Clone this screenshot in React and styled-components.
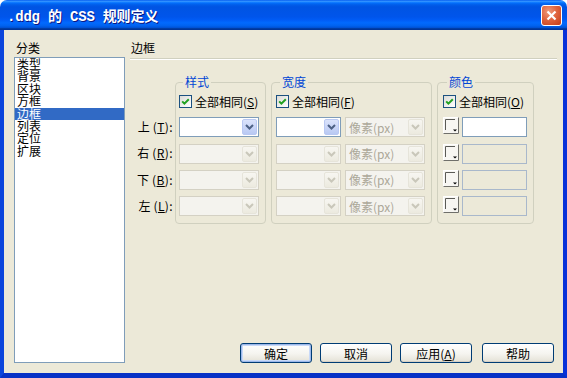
import React from 'react'
import styled, { createGlobalStyle } from 'styled-components'

const GlobalStyle = createGlobalStyle`
  html, body {
    margin: 0;
    padding: 0;
    background: #ffffff;
  }
  body {
    font-family: "Noto Sans CJK SC", "Liberation Sans", sans-serif;
    font-size: 12px;
    color: #000;
  }
`

const Window = styled.div`
  width: 567px;
  height: 378px;
  display: flex;
  flex-direction: column;
  overflow: hidden;
  border-radius: 7px 7px 0 0;
`

const TitleBar = styled.div`
  flex: none;
  height: 30px;
  box-sizing: border-box;
  display: flex;
  align-items: center;
  justify-content: space-between;
  padding: 0 5px 0 7px;
  background: linear-gradient(
    180deg,
    #0058ee 0%,
    #3593ff 4%,
    #288eff 6%,
    #127dff 8%,
    #036ffc 10%,
    #0262ee 14%,
    #0057e5 20%,
    #0054e3 24%,
    #0055eb 56%,
    #005bf5 66%,
    #026afe 76%,
    #0062ef 86%,
    #0052d6 92%,
    #0040ab 94%,
    #003092 100%
  );
`

const Title = styled.div`
  color: #fff;
  font-family: "Liberation Mono", "Noto Sans CJK SC", monospace;
  font-weight: bold;
  font-size: 14px;
  letter-spacing: -0.2px;
  text-shadow: 1px 1px 0 #0a1883;
  white-space: pre;
`

const CloseButton = styled.button`
  width: 21px;
  height: 21px;
  padding: 0;
  border: 1px solid #fff;
  border-radius: 3px;
  display: flex;
  align-items: center;
  justify-content: center;
  background: radial-gradient(circle at 35% 30%, #ee9a7b 0%, #e0653f 45%, #c43b16 100%);
`

const Frame = styled.div`
  flex: 1;
  display: flex;
  flex-direction: column;
  background: #ece9d8;
  border-left: 4px solid #0b45dc;
  border-right: 4px solid #0831d9;
  border-bottom: 5px solid #0731c6;
  padding: 10px 6px 10px 10px;
  min-height: 0;
`

const Main = styled.div`
  flex: 1;
  display: flex;
  gap: 5px;
  min-height: 0;
`

const Sidebar = styled.div`
  width: 111px;
  flex: none;
  display: flex;
  flex-direction: column;
`

const Caption = styled.div`
  height: 15px;
  line-height: 15px;
  padding-left: 2px;
  margin-bottom: 2px;
`

const CategoryList = styled.ul`
  flex: 1;
  margin: 0;
  padding: 0;
  list-style: none;
  background: #fff;
  border: 1px solid #7f9db9;
`

const CategoryItem = styled.li`
  height: 12.4px;
  line-height: 12.4px;
  padding-left: 2px;
  background: ${p => (p.$active ? '#316ac5' : 'transparent')};
  color: ${p => (p.$active ? '#fff' : '#000')};
`

const Panel = styled.div`
  flex: 1;
  display: flex;
  flex-direction: column;
`

const PanelHeader = styled.div`
  height: 15px;
  line-height: 15px;
  padding: 0 0 3px 1px;
  border-bottom: 1px solid #d0d0bf;
  box-shadow: 0 1px 0 #ffffff;
`

const GroupRow = styled.div`
  display: flex;
  gap: 5px;
  margin-top: 16px;
`

const SideLabels = styled.div`
  width: 45px;
  margin-right: -5px;
  flex: none;
  display: flex;
  flex-direction: column;
  gap: 6.33px;
  padding-top: 42px;
`

const SideLabel = styled.div`
  height: 20px;
  line-height: 20px;
  text-align: right;
  padding-right: 2px;
  white-space: nowrap;
`

const Paren = styled.span`
  margin-left: 3px;
  letter-spacing: 0.4px;
`

const Group = styled.fieldset`
  margin: 0;
  width: ${p => p.$w}px;
  min-inline-size: 0;
  box-sizing: border-box;
  padding: 2px 0 7px ${p => p.$pad}px;
  border: 1px solid #d0d0bf;
  border-radius: 4px;
  display: flex;
  flex-direction: column;
  gap: 6.33px;
`

const Legend = styled.legend`
  margin-left: 4px;
  padding: 0 2px;
  line-height: 14px;
  color: #0046d5;
`

const CheckRow = styled.label`
  height: 20px;
  display: flex;
  align-items: center;
  gap: 3px;
  white-space: nowrap;
`

const CheckBox = styled.span`
  width: 13px;
  height: 13px;
  box-sizing: border-box;
  border: 1px solid #1c5180;
  background: linear-gradient(135deg, #dcdcd7 0%, #ffffff 100%);
  display: flex;
  align-items: center;
  justify-content: center;
`

const Row = styled.div`
  height: 20px;
  display: flex;
  align-items: ${p => (p.$top ? 'flex-start' : 'center')};
  gap: ${p => p.$gap || 4}px;
`

const Combo = styled.div`
  width: ${p => p.$w}px;
  height: 20px;
  box-sizing: border-box;
  border: 1px solid ${p => (p.$disabled ? '#d4d1c4' : '#7f9db9')};
  background: ${p => (p.$disabled ? '#f4f3ee' : '#fff')};
  display: flex;
  align-items: center;
  justify-content: space-between;
  color: #aca899;
`

const ComboText = styled.span`
  padding-left: 3px;
  white-space: nowrap;
`

const DropButton = styled.span`
  width: 15px;
  height: 16px;
  margin-right: 1px;
  box-sizing: border-box;
  border-radius: 2px;
  border: 1px solid ${p => (p.$disabled ? '#e6e4da' : '#b9c8f2')};
  background: ${p =>
    p.$disabled
      ? 'linear-gradient(180deg, #f7f6f1, #eceadf)'
      : 'linear-gradient(180deg, #dbe3fb, #b9c9f3)'};
  display: flex;
  align-items: center;
  justify-content: center;
`

const ColorBox = styled.div`
  width: 65px;
  height: 20px;
  box-sizing: border-box;
  border: 1px solid ${p => (p.$disabled ? '#a9b8cb' : '#7f9db9')};
  background: ${p => (p.$disabled ? '#ece9d8' : '#fff')};
`

const ButtonBar = styled.div`
  margin-top: auto;
  display: flex;
  justify-content: flex-end;
  gap: 8px;
  padding-right: 3px;
`

const DialogButton = styled.button`
  width: 72px;
  height: 20px;
  padding: 0;
  margin-left: ${p => p.$extra || 0}px;
  font-family: inherit;
  font-size: 12px;
  color: #000;
  border: 1px solid #003c74;
  border-radius: 3px;
  background: linear-gradient(180deg, #ffffff 0%, #f5f4ef 55%, #e4e1d6 100%);
  box-shadow: ${p =>
    p.$primary ? 'inset 0 0 0 1px #9cb8ea, inset 0 0 0 2px #c8d9f8' : 'inset 0 -1px 0 #d6d0c5'};
`

const Key = styled.span`
  text-decoration: underline;
`

function Chevron({ disabled }) {
  return (
    <svg width="9" height="6" viewBox="0 0 9 6">
      <path
        d="M1 1L4.5 4.5L8 1"
        fill="none"
        stroke={disabled ? '#c9c7ba' : '#4d6185'}
        strokeWidth="2"
      />
    </svg>
  )
}

function Check() {
  return (
    <svg width="9" height="9" viewBox="0 0 9 9">
      <path d="M1.2 4.4L3.4 6.6L7.8 2.2" fill="none" stroke="#21a121" strokeWidth="2" />
    </svg>
  )
}

function Swatch() {
  return (
    <svg width="16" height="17" viewBox="0 0 16 17">
      <rect x="0" y="0" width="16" height="17" fill="#f7f6f2" />
      <path d="M0.5 16.5V0.5H15.5" fill="none" stroke="#ffffff" />
      <path d="M0.5 16.5H15.5V0.5" fill="none" stroke="#6f6f6a" />
      <path d="M2.5 13V2.5H12" fill="none" stroke="#5a5a56" />
      <path d="M10 12.5H14L12 14.5Z" fill="#000" />
    </svg>
  )
}

function CheckLine({ k }) {
  return (
    <CheckRow>
      <CheckBox>
        <Check />
      </CheckBox>
      <span>
        全部相同(<Key>{k}</Key>)
      </span>
    </CheckRow>
  )
}

function Select({ w, disabled, text }) {
  return (
    <Combo $w={w} $disabled={disabled}>
      <ComboText>{text}</ComboText>
      <DropButton $disabled={disabled}>
        <Chevron disabled={disabled} />
      </DropButton>
    </Combo>
  )
}

const categories = ['类型', '背景', '区块', '方框', '边框', '列表', '定位', '扩展']
const sides = [
  ['上', 'T'],
  ['右', 'R'],
  ['下', 'B'],
  ['左', 'L'],
]

export default function App() {
  return (
    <>
      <GlobalStyle />
      <Window>
        <TitleBar>
          <Title>.ddg 的 CSS 规则定义</Title>
          <CloseButton>
            <svg width="11" height="11" viewBox="0 0 11 11">
              <path d="M1.5 1.5L9.5 9.5M9.5 1.5L1.5 9.5" stroke="#fff" strokeWidth="2.2" />
            </svg>
          </CloseButton>
        </TitleBar>
        <Frame>
          <Main>
            <Sidebar>
              <Caption>分类</Caption>
              <CategoryList>
                {categories.map(c => (
                  <CategoryItem key={c} $active={c === '边框'}>
                    {c}
                  </CategoryItem>
                ))}
              </CategoryList>
            </Sidebar>
            <Panel>
              <PanelHeader>边框</PanelHeader>
              <GroupRow>
                <SideLabels>
                  {sides.map(([t, k]) => (
                    <SideLabel key={k}>
                      {t}
                      <Paren>
                        (<Key>{k}</Key>):
                      </Paren>
                    </SideLabel>
                  ))}
                </SideLabels>

                <Group $w={91} $pad={3}>
                  <Legend>样式</Legend>
                  <CheckLine k="S" />
                  {sides.map(([t], i) => (
                    <Row key={t}>
                      <Select w={80} disabled={i > 0} />
                    </Row>
                  ))}
                </Group>

                <Group $w={161} $pad={4}>
                  <Legend>宽度</Legend>
                  <CheckLine k="F" />
                  {sides.map(([t], i) => (
                    <Row key={t}>
                      <Select w={65} disabled={i > 0} />
                      <Select w={80} disabled text="像素(px)" />
                    </Row>
                  ))}
                </Group>

                <Group $w={97} $pad={5}>
                  <Legend>颜色</Legend>
                  <CheckLine k="O" />
                  {sides.map(([t], i) => (
                    <Row key={t} $top $gap={3}>
                      <Swatch />
                      <ColorBox $disabled={i > 0} />
                    </Row>
                  ))}
                </Group>
              </GroupRow>

              <ButtonBar>
                <DialogButton $primary>确定</DialogButton>
                <DialogButton>取消</DialogButton>
                <DialogButton>
                  应用(<Key>A</Key>)
                </DialogButton>
                <DialogButton $extra={2}>帮助</DialogButton>
              </ButtonBar>
            </Panel>
          </Main>
        </Frame>
      </Window>
    </>
  )
}
